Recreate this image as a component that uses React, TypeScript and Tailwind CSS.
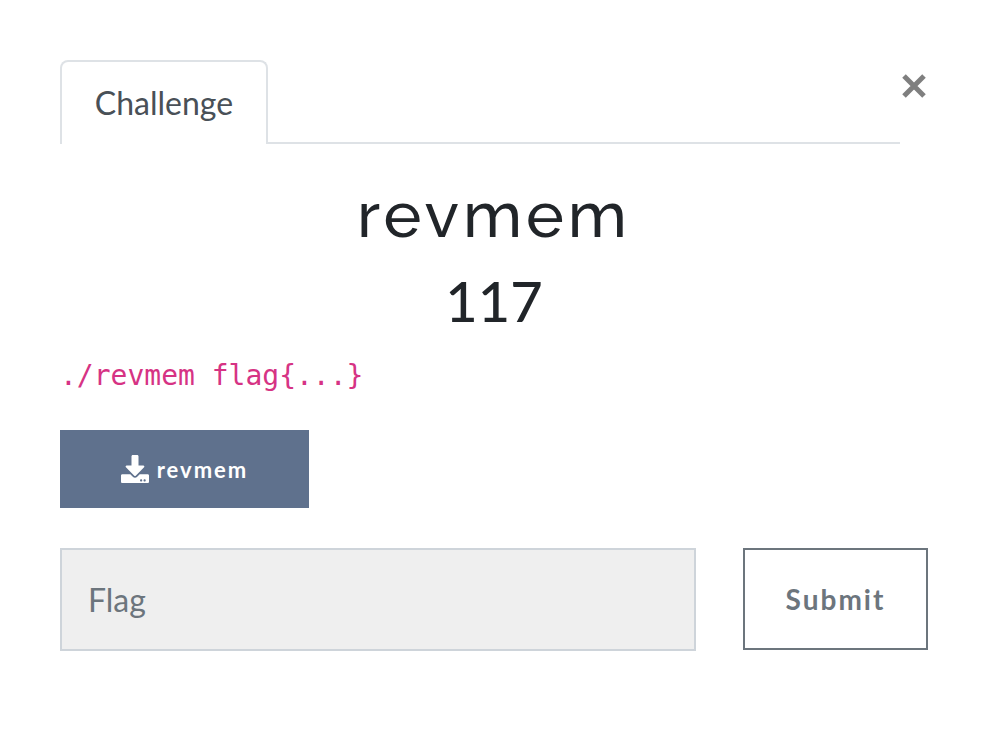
import { FaDownload } from "react-icons/fa";

export default function App() {
  return (
    <main className="h-[738px] w-[988px] overflow-hidden bg-white px-[60px] pt-[60px] font-['Lato',sans-serif] text-[#212529]">
      <header className="flex h-[84px] items-start">
        <div className="flex h-[84px] w-[840px]">
          <div className="flex w-[208px] items-center justify-center rounded-t-[8px] border-2 border-b-0 border-[#dee2e6] text-[32px] text-[#495057]">
            Challenge
          </div>
          <div className="flex-1 border-b-2 border-[#dee2e6]" />
        </div>
        <button aria-label="Close" className="mt-[14px] ml-[2px] h-6 w-6">
          <svg viewBox="0 0 24 24" className="h-6 w-6" stroke="#7f7f7f" strokeWidth="5">
            <path d="M2 2L22 22M22 2L2 22" />
          </svg>
        </button>
      </header>
      <h2 className="mt-[32px] h-[77px] text-center font-['Raleway','Lato',sans-serif] text-[64px] leading-[77px] font-medium tracking-[4px]">revmem</h2>
      <h3 className="mt-[14px] h-[67px] text-center text-[56px] leading-[67px] font-medium">117</h3>
      <code className="mt-[18px] block h-[48px] font-['DejaVu_Sans_Mono',monospace] text-[28px] leading-[48px] text-[#d63384]">./revmem flag&#123;...&#125;</code>
      <button className="mt-[30px] flex h-[78px] w-[249px] items-center justify-center gap-2 bg-[#5f718d] text-[22px] font-bold tracking-[2px] text-white">
        <FaDownload size={28} />
        <span>revmem</span>
      </button>
      <form className="mt-[40px] flex justify-between">
        <input placeholder="Flag" className="h-[103px] w-[636px] border-2 border-[#ced4da] bg-[#efefef] px-[26px] text-[32px] placeholder:text-[#6c757d]" />
        <button type="button" className="h-[102px] w-[185px] border-2 border-[#6c757d] text-[28px] font-bold tracking-[2px] text-[#6c757d]">Submit</button>
      </form>
    </main>
  );
}
